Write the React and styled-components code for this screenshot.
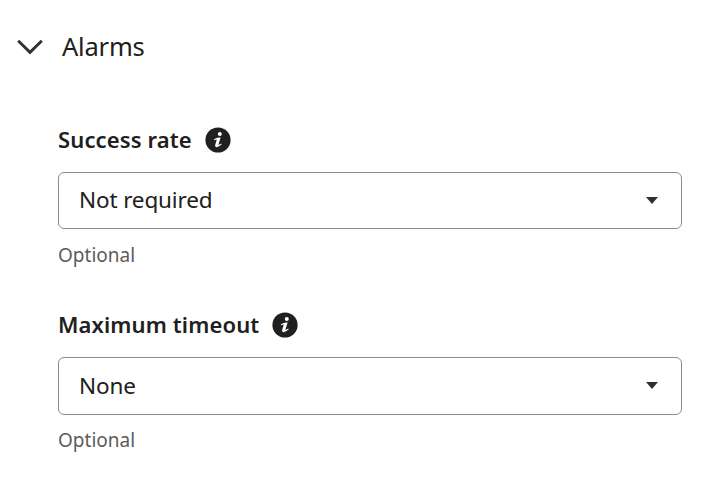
import styled, { createGlobalStyle } from "styled-components"

const fields = [
    { label: "Success rate", value: "Not required", hint: "Optional" },
    { label: "Maximum timeout", value: "None", hint: "Optional", tall: true },
]

const App = () => {
    return (
        <>
            <GlobalStyle />
            <Section>
                <Header>
                    <Chevron viewBox="0 0 26 16">
                        <path d="M1.2 1.8 L13 13.4 L24.8 1.8" />
                    </Chevron>
                    <Title>Alarms</Title>
                </Header>
                <Fields>
                    {fields.map((field) => (
                        <Field key={field.label}>
                            <LabelRow>
                                <Label>{field.label}</Label>
                                <InfoIcon />
                            </LabelRow>
                            <Select type="button" $tall={field.tall}>
                                <Value $tall={field.tall}>{field.value}</Value>
                                <Caret viewBox="0 0 12 7">
                                    <path d="M0 0H12L6 7Z" />
                                </Caret>
                            </Select>
                            <Hint $tall={field.tall}>{field.hint}</Hint>
                        </Field>
                    ))}
                </Fields>
            </Section>
        </>
    )
}

export default App

const InfoIcon = () => (
    <Info viewBox="0 0 26 26">
        <circle cx="13" cy="13" r="12.6" fill="#202020" />
        <ellipse cx="14.8" cy="7" rx="2" ry="1.9" fill="#fff" />
        <path d="M8.8 12.4 Q11.5 10.2 15.6 10.5 L13.5 17.6 Q13.7 18.2 16.2 16.5 L16.7 17.3 Q13.8 20.3 11.5 20.2 Q9.6 20 10.2 17.8 L11.8 12.4 Q10.7 12.4 9.2 13.3 Z" fill="#fff" />
    </Info>
)

const GlobalStyle = createGlobalStyle`
    body {
        margin: 0;
        background: #fff;
        color: #202020;
        font-family: "Noto Sans", "Open Sans", sans-serif;
    }
`

const Section = styled.section`
    box-sizing: border-box;
    width: 710px;
    height: 484px;
    padding: 28px 28px 0 17px;
`

const Header = styled.div`
    display: flex;
    align-items: center;
    height: 36px;
    gap: 19px;
`

const Chevron = styled.svg`
    width: 26px;
    height: 16px;
    margin-top: 1px;
    fill: none;
    stroke: #333;
    stroke-width: 2.9;
`

const Title = styled.h2`
    margin: 0;
    font-size: 25.5px;
    font-weight: 400;
    line-height: 36px;
    letter-spacing: -0.2px;
`

const Fields = styled.div`
    display: flex;
    flex-direction: column;
    gap: 43px;
    padding: 60px 0 0 41px;
`

const Field = styled.div`
    height: 142px;
`

const LabelRow = styled.div`
    display: flex;
    align-items: center;
    gap: 13px;
    height: 32px;
    margin-bottom: 16px;
`

const Label = styled.label`
    padding-bottom: 2px;
    font-size: 22px;
    font-weight: 600;
    line-height: 32px;
    letter-spacing: 0.12px;
`

const Info = styled.svg`
    width: 26px;
    height: 26px;
`

const Select = styled.button`
    display: flex;
    align-items: flex-start;
    justify-content: space-between;
    box-sizing: border-box;
    width: 624px;
    height: ${(props) => (props.$tall ? 58 : 57)}px;
    padding: 0 23px 0 20px;
    border: 1px solid #8c8c8c;
    border-radius: 6px;
    background: #fff;
    color: #202020;
    font: 400 22.5px "Noto Sans", "Open Sans", sans-serif;
`

const Value = styled.span`
    padding-top: ${(props) => (props.$tall ? 12 : 11)}px;
    line-height: 32px;
    letter-spacing: -0.14px;
`

const Caret = styled.svg`
    width: 12px;
    height: 7px;
    margin-top: 24px;
    fill: #303030;
`

const Hint = styled.p`
    margin: ${(props) => (props.$tall ? 11 : 12)}px 0 0;
    color: #5c5c5c;
    font-size: 19px;
    line-height: 28px;
`
